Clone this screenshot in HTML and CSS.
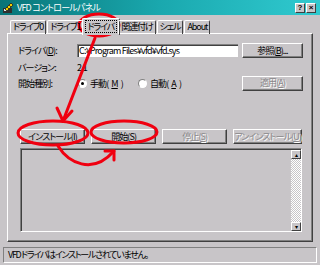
FILE: index.html
```html
<!DOCTYPE html>
<html lang="ja">
<head>
    <meta charset="UTF-8">
    <title>VFD コントロールパネル</title>
    <link rel="stylesheet" href="styles.css">
</head>
<body>
    <div class="window">
        <div class="titlebar">
            <svg class="app-icon" width="12" height="12" viewBox="0 0 12 12">
                <rect x="1" y="6" width="9" height="5" fill="#303030"/>
                <rect x="2" y="7" width="3" height="2" fill="#e8e8e8"/>
                <path d="M3 7 L9 1 L11 3 L5 9 Z" fill="#f0d000" stroke="#202020" stroke-width="0.8"/>
                <path d="M5 5 L7 7 M7 3 L9 5" stroke="#202020" stroke-width="0.8"/>
            </svg>
            <span class="title">VFD コントロールパネル</span>
            <div class="caption-buttons">
                <span class="cap-btn">?</span>
                <span class="cap-btn">×</span>
            </div>
        </div>

        <div class="tabs">
            <div class="tab">ドライブ0</div>
            <div class="tab">ドライブ1</div>
            <div class="tab active"><span class="focus">ドライバ</span></div>
            <div class="tab">関連付け</div>
            <div class="tab">シェル</div>
            <div class="tab">About</div>
        </div>

        <div class="panel">
            <div class="row row-driver">
                <span class="label">ドライバ(<u>D</u>):</span>
                <div class="textbox">C:¥Program Files¥vfd¥vfd.sys</div>
                <button class="btn btn-side">参照(<u>B</u>)...</button>
            </div>
            <div class="row row-version">
                <span class="label">バージョン:</span>
                <span class="value">2.1</span>
            </div>
            <div class="row row-start">
                <span class="label">開始種別:</span>
                <span class="radio-item radio-manual"><span class="radio checked"></span>手動(<u>M</u>)</span>
                <span class="radio-item"><span class="radio"></span>自動(<u>A</u>)</span>
                <button class="btn btn-side" disabled>適用(<u>A</u>)</button>
            </div>
            <div class="actions">
                <button class="btn">インストール(<u>I</u>)</button>
                <button class="btn">開始(<u>S</u>)</button>
                <button class="btn" disabled>停止(<u>S</u>)</button>
                <button class="btn" disabled>アンインストール(<u>U</u>)</button>
            </div>
            <div class="listbox">
                <div class="list-area"></div>
                <div class="scrollbar">
                    <span class="scroll-btn">▴</span>
                    <span class="scroll-track"></span>
                    <span class="scroll-btn">▾</span>
                </div>
            </div>
        </div>

        <div class="statusbar">VFD ドライバはインストールされていません。</div>

        <!-- red hand-drawn marks over the dialog -->
        <svg class="annotation" width="320" height="265" viewBox="0 0 320 265">
            <g fill="none" stroke="#f00010" stroke-width="3" stroke-linecap="round" stroke-linejoin="round">
                <ellipse cx="99" cy="25" rx="20" ry="11"/>
                <path d="M95 38 L63 121"/>
                <path d="M57 108 L63 121 L72 111"/>
                <ellipse cx="53" cy="133" rx="35" ry="12"/>
                <ellipse cx="124" cy="132" rx="33" ry="11"/>
                <path d="M58 146 C 68 162, 92 176, 114 151"/>
                <path d="M105 151 L114 151 L114 160"/>
            </g>
        </svg>
    </div>
</body>
</html>
```

FILE: styles.css
```css
* {
    box-sizing: border-box;
}

body {
    margin: 0;
    background: #c8c5c8;
    font-family: "Noto Sans CJK JP", "Liberation Sans", sans-serif;
    font-size: 9px;
    letter-spacing: -0.9px;
    font-feature-settings: "palt";
    color: #000;
}

.window {
    position: relative;
    width: 320px;
    height: 265px;
    background: #c8c5c8;
    overflow: hidden;
}

.titlebar {
    display: flex;
    align-items: center;
    height: 15px;
    padding: 0 4px 0 2px;
    background: linear-gradient(to right, #087478, #1aa8ae 50%, #30cad0);
    color: #fff;
}

.app-icon {
    flex: none;
    margin-right: 3px;
}

.title {
    line-height: 15px;
    letter-spacing: -0.8px;
}

.caption-buttons {
    display: flex;
    gap: 1px;
    margin-left: auto;
}

.cap-btn {
    width: 10px;
    height: 10px;
    background: #c8c5c8;
    border-top: 1px solid #fff;
    border-left: 1px solid #fff;
    border-right: 1px solid #404040;
    border-bottom: 1px solid #404040;
    font-family: "Liberation Sans", sans-serif;
    font-size: 8px;
    font-weight: bold;
    letter-spacing: 0;
    line-height: 8px;
    text-align: center;
    color: #000;
}

.tabs {
    display: flex;
    align-items: flex-end;
    height: 16px;
    margin: 3px 0 -1px 10px;
    position: relative;
    z-index: 1;
    letter-spacing: -1.1px;
}

.tab {
    height: 14px;
    padding: 0 2px;
    margin-right: 1px;
    border-top: 1px solid #fff;
    border-left: 1px solid #fff;
    border-right: 1px solid #404040;
    border-radius: 2px 2px 0 0;
    line-height: 12px;
    white-space: nowrap;
}

.tab.active {
    height: 17px;
    margin: 0 0 -1px -2px;
    padding: 1px 2px 0;
    background: #c8c5c8;
}

.tab.active + .tab {
    margin-left: -2px;
}

.focus {
    display: inline-block;
    padding: 0 2px 0 1px;
    border: 1px dotted #000;
    line-height: 11px;
}

.panel {
    height: 209px;
    margin: 0 7px;
    padding: 9px 9px 0 10px;
    border-top: 1px solid #fff;
    border-left: 1px solid #fff;
    border-right: 1px solid #404040;
    border-bottom: 1px solid #404040;
    box-shadow: inset -1px -1px #808080;
}

.row {
    display: flex;
    align-items: center;
    white-space: nowrap;
}

.label {
    width: 59px;
    flex: none;
}

.row-driver {
    height: 15px;
}

.textbox {
    width: 161px;
    height: 13px;
    padding-left: 1px;
    background: #fff;
    border-top: 1px solid #808080;
    border-left: 1px solid #808080;
    box-shadow: inset 1px 1px #404040;
    line-height: 11px;
    letter-spacing: -0.8px;
    overflow: hidden;
}

.btn-side {
    width: 61px;
    margin-left: auto;
}

.row-version {
    height: 12px;
    margin-top: 3px;
}

.row-start {
    height: 16px;
    margin-top: 2px;
}

.radio-item {
    display: flex;
    align-items: center;
    gap: 3px;
}

.radio-manual {
    width: 60px;
    margin-left: 1px;
}

.radio {
    width: 9px;
    height: 9px;
    border-radius: 50%;
    background: #fff;
    border: 1px solid #808080;
    border-right-color: #fff;
    border-bottom-color: #fff;
    position: relative;
}

.radio.checked::after {
    content: "";
    position: absolute;
    left: 2px;
    top: 2px;
    width: 3px;
    height: 3px;
    border-radius: 50%;
    background: #000;
}

.btn {
    height: 15px;
    padding: 0;
    background: #c8c5c8;
    border: 1px solid;
    border-color: #fff #404040 #404040 #fff;
    box-shadow: inset -1px -1px #808080;
    font: inherit;
    letter-spacing: inherit;
    line-height: 12px;
    color: #000;
    white-space: nowrap;
}

.btn:disabled {
    color: #8a888a;
    text-shadow: 1px 1px #fff;
}

.actions {
    display: grid;
    grid-template-columns: repeat(4, 1fr);
    gap: 6px;
    margin: 38px 1px 0 2px;
}

.listbox {
    display: flex;
    height: 84px;
    margin: 4px 1px 0 2px;
    border-top: 1px solid #808080;
    border-left: 1px solid #808080;
    border-right: 1px solid #fff;
    border-bottom: 1px solid #fff;
    box-shadow: inset 1px 1px #404040;
}

.list-area {
    flex: 1;
}

.scrollbar {
    display: flex;
    flex-direction: column;
    width: 10px;
    margin: 1px 0 0;
}

.scroll-btn {
    height: 9px;
    background: #c8c5c8;
    border: 1px solid;
    border-color: #fff #404040 #404040 #fff;
    font-size: 6px;
    letter-spacing: 0;
    line-height: 7px;
    text-align: center;
    color: #000;
}

.scroll-track {
    flex: 1;
    background: repeating-conic-gradient(#fff 0 25%, #c8c5c8 0 50%) 0 0 / 2px 2px;
}

.statusbar {
    height: 16px;
    margin: 5px 3px 0;
    padding-left: 4px;
    border-top: 1px solid #808080;
    border-left: 1px solid #808080;
    border-right: 1px solid #fff;
    border-bottom: 1px solid #fff;
    line-height: 14px;
    letter-spacing: -1.3px;
    white-space: nowrap;
}

.annotation {
    position: absolute;
    top: 0;
    left: 0;
    pointer-events: none;
}
```
